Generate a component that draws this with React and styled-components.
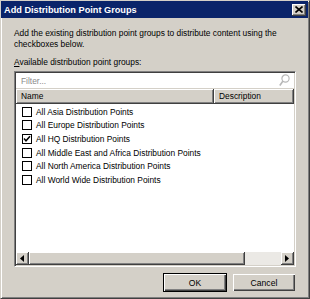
import React from "react";
import styled, { createGlobalStyle } from "styled-components";

const GlobalStyle = createGlobalStyle`
  html, body {
    margin: 0;
    padding: 0;
    background: #d4d0c8;
  }
  * {
    box-sizing: border-box;
  }
`;

const groups = [
  { name: "All Asia Distribution Points", checked: false },
  { name: "All Europe Distribution Points", checked: false },
  { name: "All HQ Distribution Points", checked: true },
  { name: "All Middle East and Africa Distribution Points", checked: false },
  { name: "All North America Distribution Points", checked: false },
  { name: "All World Wide Distribution Points", checked: false },
];

export default function App() {
  return (
    <>
      <GlobalStyle />
      <Window>
        <TitleBar>
          <Title>Add Distribution Point Groups</Title>
          <CloseButton>
            <svg width="8" height="7" viewBox="0 0 8 7">
              <path d="M0.5 0.5 L7.5 6.5 M7.5 0.5 L0.5 6.5" stroke="#000" strokeWidth="1.6" />
            </svg>
          </CloseButton>
        </TitleBar>
        <Body>
          <Intro>
            Add the existing distribution point groups to distribute content using the
            checkboxes below.
          </Intro>
          <Label>
            <u>A</u>vailable distribution point groups:
          </Label>
          <Frame>
            <Filter>
              <span>Filter...</span>
              <svg width="11" height="13" viewBox="0 0 11 13">
                <circle cx="6.5" cy="4.5" r="3.6" fill="none" stroke="#b8b8b8" strokeWidth="1.2" />
                <path d="M4 7 L0.8 11.5" stroke="#b8b8b8" strokeWidth="1.6" />
              </svg>
            </Filter>
            <Header>
              <HeaderCell $width="198px">Name</HeaderCell>
              <HeaderCell $width="auto">Description</HeaderCell>
            </Header>
            <Rows>
              {groups.map((g) => (
                <Row key={g.name}>
                  <Check>
                    {g.checked && (
                      <svg width="8" height="8" viewBox="0 0 8 8">
                        <path d="M1 3.5 L3 5.8 L7 1.2" stroke="#000" strokeWidth="1.5" fill="none" />
                      </svg>
                    )}
                  </Check>
                  <span>{g.name}</span>
                </Row>
              ))}
            </Rows>
            <ScrollBar>
              <ArrowButton>
                <svg width="4" height="7" viewBox="0 0 4 7">
                  <path d="M4 0 L0 3.5 L4 7 Z" fill="#000" />
                </svg>
              </ArrowButton>
              <Thumb />
              <Track />
              <ArrowButton>
                <svg width="4" height="7" viewBox="0 0 4 7">
                  <path d="M0 0 L4 3.5 L0 7 Z" fill="#000" />
                </svg>
              </ArrowButton>
            </ScrollBar>
          </Frame>
          <Buttons>
            <Button $default>OK</Button>
            <Button>Cancel</Button>
          </Buttons>
        </Body>
      </Window>
    </>
  );
}

const Window = styled.div`
  width: 310px;
  height: 299px;
  display: flex;
  flex-direction: column;
  background: #d4d0c8;
  border-top: 1px solid #d4d0c8;
  border-left: 1px solid #d4d0c8;
  border-right: 1px solid #404040;
  border-bottom: 1px solid #404040;
  box-shadow: inset 1px 1px 0 #ffffff, inset -1px -1px 0 #808080;
  padding: 0 2px 2px 2px;
  font-family: "Liberation Sans", Arial, sans-serif;
  font-size: 8.4px;
  color: #000;
`;

const TitleBar = styled.div`
  height: 17px;
  margin: 0 -1px 0 -2px;
  background: #0a246a;
  display: flex;
  align-items: center;
  justify-content: space-between;
  padding: 0 2px 0 3px;
`;

const Title = styled.div`
  color: #fff;
  font-weight: bold;
  font-size: 9.2px;
`;

const CloseButton = styled.div`
  width: 14px;
  height: 12px;
  background: #d4d0c8;
  border-right: 1px solid #404040;
  border-bottom: 1px solid #404040;
  box-shadow: inset 1px 1px 0 #ffffff, inset -1px -1px 0 #808080;
  display: flex;
  align-items: center;
  justify-content: center;
`;

const Body = styled.div`
  flex: 1;
  display: flex;
  flex-direction: column;
  padding: 10px 11px 4px 11px;
`;

const Intro = styled.div`
  line-height: 10.5px;
  padding-right: 10px;
`;

const Label = styled.div`
  margin-top: 8px;
  line-height: 10px;
`;

const Frame = styled.div`
  margin-top: 4px;
  height: 196px;
  display: flex;
  flex-direction: column;
  background: #fff;
  border-top: 1px solid #808080;
  border-left: 1px solid #808080;
  border-right: 1px solid #ffffff;
  border-bottom: 1px solid #ffffff;
  box-shadow: inset 1px 1px 0 #404040, inset -1px -1px 0 #d4d0c8;
  padding: 1px;
`;

const Filter = styled.div`
  height: 16px;
  display: flex;
  align-items: center;
  justify-content: space-between;
  padding: 0 4px 0 5px;
  color: #8a8a8a;
  border-bottom: 1px solid #d4d0c8;
`;

const Header = styled.div`
  height: 15px;
  display: flex;
  background: #d4d0c8;
`;

const HeaderCell = styled.div`
  width: ${(p) => p.$width};
  flex: ${(p) => (p.$width === "auto" ? 1 : "none")};
  display: flex;
  align-items: center;
  padding-left: 5px;
  border-right: 1px solid #404040;
  border-bottom: 1px solid #404040;
  box-shadow: inset 1px 1px 0 #ffffff, inset -1px -1px 0 #808080;
`;

const Rows = styled.div`
  flex: 1;
  padding-top: 1px;
`;

const Row = styled.div`
  height: 13.6px;
  display: flex;
  align-items: center;
  padding-left: 6px;
  gap: 4px;
`;

const Check = styled.div`
  width: 10px;
  height: 10px;
  border: 1.5px solid #000;
  background: #fff;
  display: flex;
  align-items: center;
  justify-content: center;
`;

const ScrollBar = styled.div`
  height: 13px;
  display: flex;
`;

const ArrowButton = styled.div`
  width: 13px;
  height: 13px;
  background: #d4d0c8;
  border-right: 1px solid #404040;
  border-bottom: 1px solid #404040;
  box-shadow: inset 1px 1px 0 #ffffff, inset -1px -1px 0 #808080;
  display: flex;
  align-items: center;
  justify-content: center;
`;

const Thumb = styled.div`
  width: 216px;
  height: 13px;
  background: #d4d0c8;
  border-right: 1px solid #404040;
  border-bottom: 1px solid #404040;
  box-shadow: inset 1px 1px 0 #ffffff, inset -1px -1px 0 #808080;
`;

const Track = styled.div`
  flex: 1;
  background: #ebe9e5;
`;

const Buttons = styled.div`
  margin-top: 6px;
  display: flex;
  justify-content: flex-end;
  gap: 5px;
`;

const Button = styled.div`
  width: 64px;
  height: 19px;
  display: flex;
  align-items: center;
  justify-content: center;
  background: #d4d0c8;
  font-size: 8.6px;
  border: 1px solid ${(p) => (p.$default ? "#000" : "transparent")};
  box-shadow: inset 1px 1px 0 #ffffff, inset -1px -1px 0 #404040,
    inset -2px -2px 0 #808080;
`;
